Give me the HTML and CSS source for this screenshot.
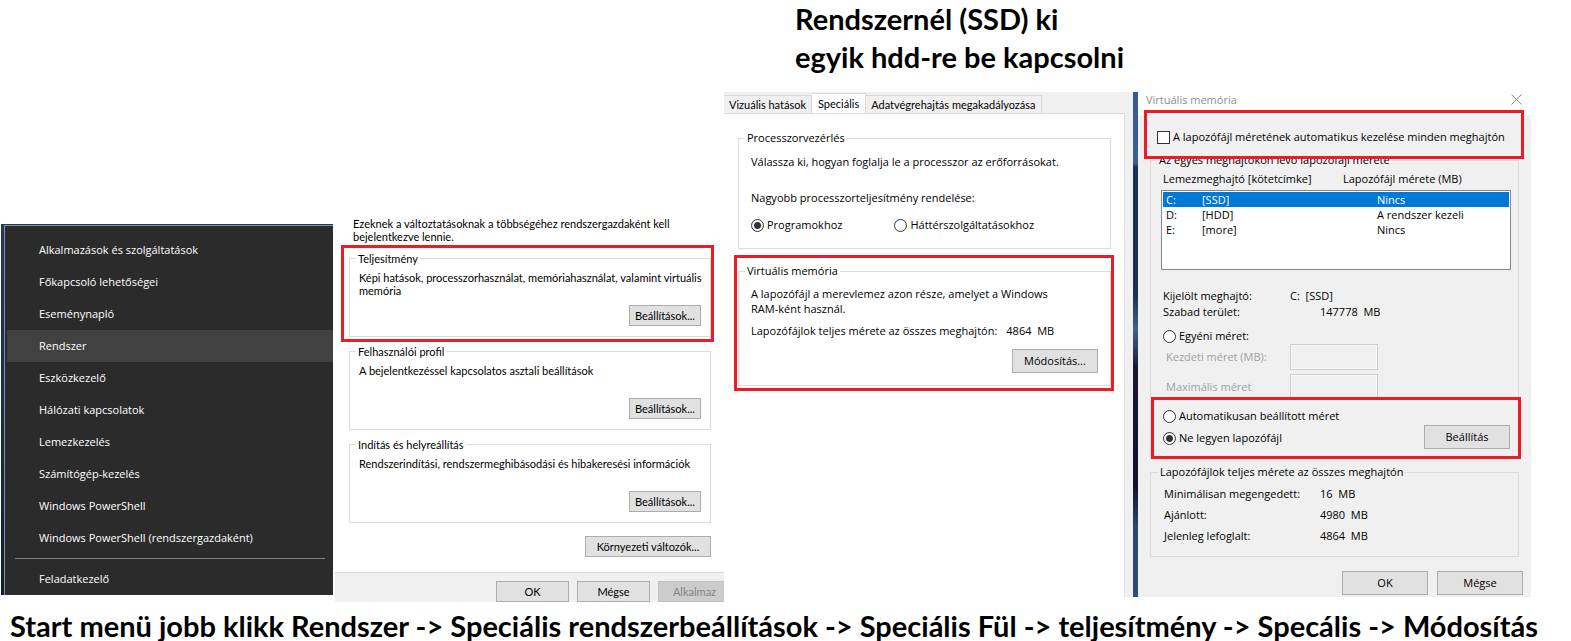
FILE: index.html
```html
<!DOCTYPE html>
<html lang="hu">
<head>
<meta charset="utf-8">
<title>Virtuális memória beállítása</title>
<link rel="stylesheet" href="styles.css">
</head>
<body>
<main class="guide">
  <h1 class="headline">Rendszernél (SSD) ki<br>egyik hdd-re be kapcsolni</h1>

  <nav class="menu">
    <ul class="menu-list">
      <li><button class="menu-item">Alkalmazások és szolgáltatások</button></li>
      <li><button class="menu-item">Főkapcsoló lehetőségei</button></li>
      <li><button class="menu-item">Eseménynapló</button></li>
      <li><button class="menu-item active">Rendszer</button></li>
      <li><button class="menu-item">Eszközkezelő</button></li>
      <li><button class="menu-item">Hálózati kapcsolatok</button></li>
      <li><button class="menu-item">Lemezkezelés</button></li>
      <li><button class="menu-item">Számítógép-kezelés</button></li>
      <li><button class="menu-item">Windows PowerShell</button></li>
      <li><button class="menu-item">Windows PowerShell (rendszergazdaként)</button></li>
      <li class="menu-last"><button class="menu-item">Feladatkezelő</button></li>
    </ul>
  </nav>

  <section class="system">
    <div class="system-page">
      <p class="system-note">Ezeknek a változtatásoknak a többségéhez rendszergazdaként kell bejelentkezve lennie.</p>
      <div class="marked mark-system">
        <fieldset class="group">
          <legend>Teljesítmény</legend>
          <p class="group-text">Képi hatások, processzorhasználat, memóriahasználat, valamint virtuális memória</p>
          <button class="btn">Beállítások...</button>
        </fieldset>
      </div>
      <fieldset class="group">
        <legend>Felhasználói profil</legend>
        <p class="group-text">A bejelentkezéssel kapcsolatos asztali beállítások</p>
        <button class="btn">Beállítások...</button>
      </fieldset>
      <fieldset class="group">
        <legend>Indítás és helyreállítás</legend>
        <p class="group-text">Rendszerindítási, rendszermeghibásodási és hibakeresési információk</p>
        <button class="btn">Beállítások...</button>
      </fieldset>
      <button class="btn btn-env">Környezeti változók...</button>
    </div>
    <div class="system-footer">
      <button class="btn">OK</button>
      <button class="btn">Mégse</button>
      <button class="btn" disabled>Alkalmaz</button>
    </div>
  </section>

  <section class="perf">
    <div class="tabs" role="tablist">
      <button class="tab" role="tab">Vizuális hatások</button>
      <button class="tab selected" role="tab" aria-selected="true">Speciális</button>
      <button class="tab" role="tab">Adatvégrehajtás megakadályozása</button>
    </div>
    <div class="perf-page">
      <fieldset class="box">
        <legend>Processzorvezérlés</legend>
        <p>Válassza ki, hogyan foglalja le a processzor az erőforrásokat.</p>
        <p class="cpu-question">Nagyobb processzorteljesítmény rendelése:</p>
        <div class="cpu-choices">
          <label class="choice"><input type="radio" name="cpu" checked>Programokhoz</label>
          <label class="choice"><input type="radio" name="cpu">Háttérszolgáltatásokhoz</label>
        </div>
      </fieldset>
      <div class="marked mark-perf">
        <fieldset class="box box-memory">
          <legend>Virtuális memória</legend>
          <p class="memory-text">A lapozófájl a merevlemez azon része, amelyet a Windows RAM-ként használ.</p>
          <p class="total"><span>Lapozófájlok teljes mérete az összes meghajtón:</span><span>4864&nbsp; MB</span></p>
          <button class="btn btn-wide">Módosítás...</button>
        </fieldset>
      </div>
    </div>
  </section>

  <section class="virtual">
    <header class="titlebar">
      <h2>Virtuális memória</h2>
      <button class="close" aria-label="Bezárás"><svg viewBox="0 0 11 11" width="11" height="11"><path d="M.5 .5l10 10M10.5 .5l-10 10" fill="none" stroke="#8a8a8a"/></svg></button>
    </header>
    <div class="virtual-body">
      <div class="marked mark-auto">
        <label class="choice"><input type="checkbox">A lapozófájl méretének automatikus kezelése minden meghajtón</label>
      </div>
      <fieldset class="box box-drives">
        <legend>Az egyes meghajtókon lévő lapozófájl mérete</legend>
        <div class="drive-head"><span>Lemezmeghajtó [kötetcímke]</span><span>Lapozófájl mérete (MB)</span></div>
        <div class="drive-list">
          <table class="drives">
            <tbody>
              <tr class="chosen"><td>C:</td><td>[SSD]</td><td>Nincs</td></tr>
              <tr><td>D:</td><td>[HDD]</td><td>A rendszer kezeli</td></tr>
              <tr><td>E:</td><td>[more]</td><td>Nincs</td></tr>
            </tbody>
          </table>
        </div>
        <dl class="facts">
          <dt>Kijelölt meghajtó:</dt><dd>C:&nbsp; [SSD]</dd>
          <dt>Szabad terület:</dt><dd class="inset">147778&nbsp; MB</dd>
        </dl>
        <label class="choice"><input type="radio" name="size">Egyéni méret:</label>
        <div class="sizes">
          <label for="size-min">Kezdeti méret (MB):</label><input id="size-min" type="text" disabled>
          <label for="size-max">Maximális méret</label><input id="size-max" type="text" disabled>
        </div>
        <div class="marked mark-none">
          <div class="modes">
            <label class="choice"><input type="radio" name="size">Automatikusan beállított méret</label>
            <label class="choice"><input type="radio" name="size" checked>Ne legyen lapozófájl</label>
          </div>
          <button class="btn btn-wide">Beállítás</button>
        </div>
      </fieldset>
      <fieldset class="box box-totals">
        <legend>Lapozófájlok teljes mérete az összes meghajtón</legend>
        <dl class="totals">
          <dt>Minimálisan megengedett:</dt><dd>16&nbsp; MB</dd>
          <dt>Ajánlott:</dt><dd>4980&nbsp; MB</dd>
          <dt>Jelenleg lefoglalt:</dt><dd>4864&nbsp; MB</dd>
        </dl>
      </fieldset>
      <div class="virtual-footer">
        <button class="btn btn-wide">OK</button>
        <button class="btn btn-wide">Mégse</button>
      </div>
    </div>
  </section>

  <p class="caption">Start menü jobb klikk Rendszer -&gt; Speciális rendszerbeállítások -&gt; Speciális Fül -&gt; teljesítmény -&gt; Specális -&gt; Módosítás</p>
</main>
</body>
</html>
```
FILE: styles.css
```css
* { box-sizing: border-box; }

body {
  margin: 0;
  height: 100vh;
  overflow: hidden;
  background: #fff;
  color: #000;
  font: 11px/16px "Open Sans", "Noto Sans", sans-serif;
}

h1, h2, p, ul, dl, dd, fieldset { margin: 0; padding: 0; }
ul { list-style: none; }
button, input { font: inherit; color: inherit; }

.guide {
  display: grid;
  grid-template-columns: minmax(0, 333fr) minmax(0, 391fr) minmax(0, 409fr) minmax(0, 398fr);
  align-items: start;
  padding-right: 40px;
}

.headline, .caption {
  font: bold 29px/38px Lato, sans-serif;
  white-space: nowrap;
}
.headline {
  grid-column: 3 / span 2;
  padding-left: 71px;
  height: 92px;
}
.caption {
  grid-column: 1 / -1;
  padding-left: 10px;
  margin-top: 5px;
}

/* Red frames drawn over the dialogs */
.marked { position: relative; }
.marked::after {
  content: "";
  position: absolute;
  border: 3px solid #ed1c24;
  pointer-events: none;
}
.mark-system::after { inset: -7px -3px -5px -8px; }
.mark-perf::after { inset: -8px -3px -5px -4px; }
.mark-auto::after { inset: -19px -5px -14px -13px; }
.mark-none::after { inset: -11px -11px -10px -12px; }

/* Shared controls */
.btn {
  height: 21px;
  padding: 0;
  border: 1px solid #adadad;
  border-radius: 0;
  background: #e1e1e1;
}
.btn:disabled { background: #ccc; border-color: #bfbfbf; color: #838383; }
.btn-wide { width: 86px; height: 24px; }

.choice { display: flex; align-items: center; gap: 3px; white-space: nowrap; }
.choice input {
  appearance: none;
  flex: none;
  width: 13px;
  height: 13px;
  margin: 0;
  border: 1px solid #333;
  background: #fff;
}
.choice input[type="radio"] { border-radius: 50%; }
.choice input[type="radio"]:checked {
  background: radial-gradient(circle, #333 0 3px, #fff 4px);
}

/* Context menu */
.menu {
  grid-column: 1;
  margin: 132px 0 0 1px;
  padding: 1px 0 0 3px;
  background: linear-gradient(#1c3a63, #14305a 40%, #0c1c3c);
}
.menu-list {
  padding: 8px 0 0 2px;
  border: solid #8d9196;
  border-width: 1px 0 0 1px;
  background: #2b2b2b;
}
.menu-item {
  display: block;
  width: 100%;
  height: 32px;
  padding: 0 0 0 32px;
  border: 0;
  background: none;
  color: #fff;
  text-align: left;
}
.menu-item.active { background: #414141; }
.menu-last { padding-top: 9px; position: relative; }
.menu-last::before {
  content: "";
  position: absolute;
  inset: 4px 8px auto 8px;
  border-top: 1px solid #808080;
}

/* System properties */
.system {
  margin: 125px 0 0 2px;
  font: 11px/13px Lato, "Liberation Sans", sans-serif;
  overflow: hidden;
}
.system-page {
  display: flex;
  flex-direction: column;
  gap: 8px;
  padding: 0 13px 15px 14px;
}
.system-note { padding: 0 24px 1px 4px; }
.group {
  display: flex;
  flex-direction: column;
  min-width: 0;
  padding: 6px 9px 10px;
  border: 1px solid #dcdcdc;
}
.group legend { margin-left: -3px; padding: 0 2px; }
.group-text { min-height: 34px; margin-right: -9px; }
.group .btn { align-self: flex-end; width: 72px; }
.btn-env { align-self: flex-end; width: 126px; margin-top: 5px; }
.system-footer {
  display: flex;
  justify-content: flex-end;
  gap: 8px;
  margin-right: -7px;
  padding-top: 8px;
  border-top: 1px solid #d9d9d9;
  background: #f0f0f0;
}
.system-footer .btn { width: 73px; }

/* Performance options */
.perf {
  align-self: stretch;
  display: flex;
  flex-direction: column;
  margin-bottom: 5px;
  padding-right: 8px;
  background: #f0f0f0;
}
.tabs {
  display: flex;
  align-items: flex-end;
  height: 21px;
  font-family: Lato, sans-serif;
}
.tab {
  height: 18px;
  padding: 0 5px;
  border: solid #d9d9d9;
  border-width: 1px 1px 0 0;
  background: #f0f0f0;
  white-space: nowrap;
}
.tab.selected { height: 20px; padding: 0 6px; background: #fff; }
.perf-page {
  flex: 1;
  display: flex;
  flex-direction: column;
  gap: 14px;
  padding: 16px 13px 0 14px;
  border: solid #dcdcdc;
  border-width: 1px 1px 0 0;
  background: #fff;
}
.box {
  min-width: 0;
  padding: 8px 12px;
  border: 1px solid #dcdcdc;
}
.box legend { margin-left: -6px; padding: 0 2px; }
.cpu-question { margin-top: 20px; }
.cpu-choices { display: flex; gap: 52px; padding: 11px 0 7px; }
.box-memory { display: flex; flex-direction: column; padding-top: 7px; }
.memory-text { padding-right: 36px; line-height: 15px; }
.total { display: flex; gap: 9px; margin-top: 7px; }
.box-memory .btn { align-self: flex-end; margin: 10px 0 4px; }

/* Virtual memory */
.virtual {
  padding-left: 5px;
  background: linear-gradient(#36588a, #3d5f92 14%, #1a2f57 15%, #1b3052 40%, #3f6090 47%, #18182e 55%, #12122a 78%, #2b4670 86%, #2f4c78);
}
.titlebar {
  display: flex;
  justify-content: space-between;
  align-items: flex-start;
  height: 23px;
  padding: 0 9px 0 8px;
  background: #fff;
  color: #8f8f8f;
}
.titlebar h2 { font: inherit; }
.close { display: flex; margin-top: 2px; padding: 0; border: 0; background: none; }
.virtual-body { padding: 14px 12px 2px; background: #f0f0f0; }
.mark-auto { margin: 0 0 7px 7px; }
.box-drives { padding: 3px 8px 9px 12px; }
.drive-head { display: grid; grid-template-columns: 180px 1fr; white-space: nowrap; }
.drive-list {
  height: 80px;
  margin: 3px -1px 18px -2px;
  padding: 1px;
  border: 1px solid #828790;
  background: #fff;
}
.drives { width: 100%; border-collapse: collapse; table-layout: fixed; line-height: 15px; }
.drives td { padding: 0 0 0 3px; }
.drives td:nth-child(1) { width: 36px; }
.drives td:nth-child(2) { width: 175px; }
.drives .chosen { background: #0078d7; color: #fff; }
.facts { display: grid; grid-template-columns: 127px 1fr; margin-bottom: 8px; }
.facts .inset { padding-left: 30px; }
.sizes {
  display: grid;
  grid-template-columns: 124px 88px;
  row-gap: 4px;
  align-items: center;
  padding-left: 3px;
  color: #a0a0a0;
}
.sizes input {
  height: 26px;
  border: 1px solid #ccc;
  background: #f0f0f0;
  box-shadow: inset 0 0 0 1px #fafafa;
}
.mark-none {
  display: flex;
  justify-content: space-between;
  align-items: flex-end;
  margin-top: 8px;
}
.modes { display: grid; gap: 6px; padding-bottom: 3px; }
.box-totals { margin-top: 5px; padding: 6px 13px 12px; }
.totals { display: grid; grid-template-columns: 156px 1fr; row-gap: 5px; }
.virtual-footer { display: flex; justify-content: flex-end; gap: 9px; margin: 14px -4px 0 0; }
```
